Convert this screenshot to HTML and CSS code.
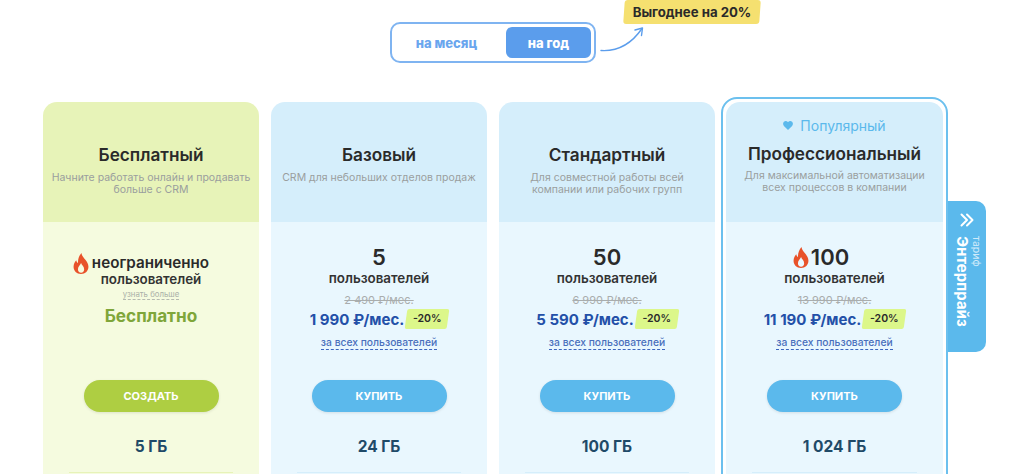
FILE: index.html
```html
<!DOCTYPE html>
<html lang="ru">
<head>
    <meta charset="UTF-8">
    <meta name="viewport" content="width=device-width, initial-scale=1.0">
    <title>Тарифы</title>
    <link rel="stylesheet" href="styles.css">
</head>
<body>
    <div class="period">
        <div class="period-switch">
            <span class="period-option">на месяц</span>
            <span class="period-option period-active">на год</span>
        </div>
        <div class="period-hint">
            <svg class="hint-arrow" viewBox="0 0 44 26">
                <path d="M1 24.500c16 1 30-6 41-22" stroke="#5b9dec" stroke-width="1.4" stroke-linecap="round" fill="none"/>
                <path d="M35 4l7.500-2-1 7.500" stroke="#5b9dec" stroke-width="1.4" stroke-linecap="round" stroke-linejoin="round" fill="none"/>
            </svg>
            <span class="hint-badge"><span class="hint-text">Выгоднее на 20%</span></span>
        </div>
    </div>

    <div class="plans">
        <div class="plan plan-free">
            <div class="plan-head">
                <h2 class="plan-title">Бесплатный</h2>
                <p class="plan-desc">Начните работать онлайн и продавать больше с CRM</p>
            </div>
            <div class="plan-body">
                <div class="plan-info">
                    <div class="users users-text">
                        <svg class="flame" viewBox="0 0 18 24"><path d="M9.500 0c.6 3.600 2.600 5.300 4.500 7.800 1.800 2.300 3.500 4.700 3.500 8C17.500 20.500 14 24 9 24S.5 20.500.5 15.800c0-3.300 1.500-5.600 3.100-7.400.3 1.500.9 2.500 2 3.200C5.300 7.400 6.800 3 9.500 0Zm-.4 11.500c-.6 2-3.600 3.800-3.600 7 0 2.400 1.500 4 3.600 4s3.500-1.600 3.500-4c0-3-2.900-4.800-3.500-7Z" fill="#e8522a"/></svg>
                        неограниченно
                    </div>
                    <div class="users-label">пользователей</div>
                    <span class="more-link">узнать больше</span>
                    <div class="free-price">Бесплатно</div>
                </div>
                <button class="btn btn-green">СОЗДАТЬ</button>
                <div class="storage">5 ГБ</div>
                <div class="divider"></div>
            </div>
        </div>

        <div class="plan">
            <div class="plan-head">
                <h2 class="plan-title">Базовый</h2>
                <p class="plan-desc">CRM для небольших отделов продаж</p>
            </div>
            <div class="plan-body">
                <div class="plan-info">
                    <div class="users">5</div>
                    <div class="users-label">пользователей</div>
                    <div class="old-price">2 490 ₽/мес.</div>
                    <div class="price">1 990 ₽/мес.<span class="discount">-20%</span></div>
                    <span class="all-users">за всех пользователей</span>
                </div>
                <button class="btn">КУПИТЬ</button>
                <div class="storage">24 ГБ</div>
                <div class="divider"></div>
            </div>
        </div>

        <div class="plan">
            <div class="plan-head">
                <h2 class="plan-title">Стандартный</h2>
                <p class="plan-desc">Для совместной работы всей компании или рабочих групп</p>
            </div>
            <div class="plan-body">
                <div class="plan-info">
                    <div class="users">50</div>
                    <div class="users-label">пользователей</div>
                    <div class="old-price">6 990 ₽/мес.</div>
                    <div class="price">5 590 ₽/мес.<span class="discount">-20%</span></div>
                    <span class="all-users">за всех пользователей</span>
                </div>
                <button class="btn">КУПИТЬ</button>
                <div class="storage">100 ГБ</div>
                <div class="divider"></div>
            </div>
        </div>

        <div class="plan plan-popular">
            <div class="plan-head">
                <div class="popular-label">
                    <svg class="heart" viewBox="0 0 12 11"><path d="M6 11 1 6C-.4 4.500-.3 2.300 1 1c1.300-1.300 3.500-1.300 4.500 0l.5.600.5-.6c1-1.300 3.200-1.300 4.500 0 1.300 1.300 1.400 3.500 0 5Z" fill="#5bb9ec"/></svg>
                    Популярный
                </div>
                <h2 class="plan-title">Профессиональный</h2>
                <p class="plan-desc">Для максимальной автоматизации всех процессов в компании</p>
            </div>
            <div class="plan-body">
                <div class="plan-info">
                    <div class="users users-hot">
                        <svg class="flame" viewBox="0 0 18 24"><path d="M9.500 0c.6 3.600 2.600 5.300 4.500 7.800 1.800 2.300 3.500 4.700 3.500 8C17.500 20.500 14 24 9 24S.5 20.500.5 15.800c0-3.300 1.500-5.600 3.100-7.400.3 1.500.9 2.500 2 3.200C5.300 7.400 6.800 3 9.500 0Zm-.4 11.500c-.6 2-3.600 3.800-3.600 7 0 2.400 1.500 4 3.600 4s3.500-1.600 3.500-4c0-3-2.900-4.800-3.500-7Z" fill="#e8522a"/></svg>100
                    </div>
                    <div class="users-label">пользователей</div>
                    <div class="old-price">13 990 ₽/мес.</div>
                    <div class="price">11 190 ₽/мес.<span class="discount">-20%</span></div>
                    <span class="all-users">за всех пользователей</span>
                </div>
                <button class="btn">КУПИТЬ</button>
                <div class="storage">1 024 ГБ</div>
                <div class="divider"></div>
            </div>
        </div>
    </div>

    <div class="enterprise-tab">
        <svg class="chevrons" viewBox="0 0 14 14"><path d="M1.500 1.500 7 7l-5.500 5.500M7 1.500 12.500 7 7 12.500" stroke="#fff" stroke-width="2" stroke-linecap="round" stroke-linejoin="round" fill="none"/></svg>
        <div class="tab-text"><span class="tab-small">тариф</span><span class="tab-big">Энтерпрайз</span></div>
    </div>
</body>
</html>
```

FILE: styles.css
```css
html, body {
    height: 474px;
    overflow: hidden;
}

body {
    position: relative;
    margin: 0;
    background-color: white;
    color: #2a2a2a;
    font-family: Inter, "Noto Sans", sans-serif;
}

.period {
    display: flex;
    align-items: flex-start;
    height: 97px;
    padding-left: 390px;
    box-sizing: border-box;
}

.period-switch {
    display: flex;
    align-items: center;
    justify-content: space-between;
    box-sizing: border-box;
    width: 206px;
    height: 41px;
    margin-top: 22px;
    padding: 0 3px 0 0;
    border: 2px solid #7fb4f1;
    border-radius: 10px;
}

.period-option {
    display: flex;
    align-items: center;
    justify-content: center;
    width: 109px;
    height: 31px;
    font-size: 13px;
    font-weight: 800;
    color: #6aa6ee;
}

.period-active {
    width: 85px;
    background-color: #5b9dec;
    border-radius: 6px;
    color: white;
}

.period-hint {
    position: relative;
    margin-left: 28px;
}

.hint-badge {
    position: relative;
    display: block;
    width: 136px;
    height: 24px;
    line-height: 25px;
    text-align: center;
    font-size: 13.200px;
    font-weight: 700;
    color: #2a2a2a;
}

.hint-badge::before {
    content: "";
    position: absolute;
    top: 0;
    left: 0;
    right: 0;
    bottom: 0;
    background-color: #f5e070;
    border-radius: 3px;
    transform: skewX(-4deg);
}

.hint-text {
    position: relative;
}

.hint-arrow {
    position: absolute;
    left: -24px;
    top: 26px;
    width: 44px;
    height: 26px;
}

.plans {
    display: grid;
    grid-template-columns: repeat(4, 216px);
    column-gap: 12px;
    box-sizing: border-box;
    height: 377px;
    padding: 5px 0 0 43px;
    overflow: hidden;
}

.plan {
    position: relative;
    height: 372px;
}

.plan-popular {
    margin-left: -1px;
}

.plan-popular::before {
    content: "";
    position: absolute;
    top: -5px;
    left: -5px;
    right: -5px;
    bottom: -20px;
    border: 2px solid #6cc0ee;
    border-radius: 16px;
}

.plan-head {
    position: relative;
    box-sizing: border-box;
    height: 120px;
    padding-top: 43px;
    text-align: center;
    background-color: #d5eefb;
    border-radius: 14px 14px 0 0;
}

.plan-free .plan-head {
    background-color: #e7f3b8;
}

.plan-title {
    margin: 0;
    font-size: 17.200px;
    line-height: 20px;
    font-weight: 600;
    color: #2a2a2a;
}

.plan-desc {
    margin: 7px 6px 0;
    font-size: 10.500px;
    line-height: 12px;
    color: #9a9e9e;
}

.plan-popular .plan-head {
    padding-top: 15px;
}

.plan-popular .plan-desc {
    margin-top: 6px;
}

.popular-label {
    display: flex;
    align-items: center;
    justify-content: center;
    gap: 7px;
    height: 17px;
    margin-bottom: 10px;
    font-size: 14px;
    color: #5bb9ec;
}

.heart {
    width: 10px;
    height: 9px;
}

.plan-body {
    position: relative;
    height: 252px;
    text-align: center;
    background-color: #e9f7fe;
}

.plan-free .plan-body {
    background-color: #f5fbdf;
}

.plan-info {
    height: 158px;
    padding-top: 24px;
    box-sizing: border-box;
}

.users {
    display: flex;
    align-items: center;
    justify-content: center;
    gap: 2px;
    height: 22px;
    font-size: 22px;
    line-height: 22px;
    font-weight: 600;
    color: #2a2a2a;
}

.users-hot {
    padding-right: 27px;
}

.users-text {
    height: 20px;
    margin-top: 7px;
    padding-right: 20px;
    font-size: 15.200px;
    gap: 3px;
}

.plan-free .plan-info {
    padding-top: 24px;
}

.flame {
    width: 16px;
    height: 21px;
}

.users-label {
    margin-top: 1px;
    font-size: 13.400px;
    line-height: 18px;
    font-weight: 600;
    color: #333;
}

.plan-free .users-label {
    margin-top: 0;
    line-height: 12px;
}

.more-link {
    display: block;
    width: fit-content;
    margin: 4px auto 0;
    font-size: 7.800px;
    line-height: 10px;
    color: #aab0a8;
    border-bottom: 1px dashed #b5bab0;
}

.free-price {
    margin-top: 5px;
    font-size: 17.200px;
    line-height: 22px;
    font-weight: 700;
    color: #7fa63a;
}

.old-price {
    margin-top: 6px;
    font-size: 11px;
    line-height: 14px;
    color: #a9adad;
    text-decoration: line-through;
}

.price {
    display: flex;
    align-items: center;
    justify-content: center;
    height: 22px;
    margin-top: 1px;
    font-size: 15px;
    font-weight: 700;
    color: #2350a8;
}

.discount {
    position: relative;
    display: inline-block;
    width: 42px;
    height: 20px;
    margin-left: 2px;
    line-height: 20px;
    font-size: 10.500px;
    font-weight: 600;
    color: #2a2a2a;
    z-index: 0;
}

.discount::before {
    content: "";
    position: absolute;
    top: 0;
    left: 0;
    right: 0;
    bottom: 0;
    z-index: -1;
    background-color: #dcf78a;
    border-radius: 2px;
    transform: skewX(-8deg);
}

.all-users {
    display: inline-block;
    margin-top: 6px;
    font-size: 10.300px;
    line-height: 13px;
    font-weight: 500;
    color: #4a6fbc;
    border-bottom: 1px dashed #3c66c0;
}

.btn {
    display: block;
    width: 135px;
    height: 32px;
    margin: 0 auto;
    padding: 0;
    border: none;
    border-radius: 16px;
    font-family: inherit;
    font-size: 11px;
    font-weight: 700;
    color: white;
    background-color: #5bb9ec;
    box-shadow: 0 1px 3px rgba(0,0,0,0.1);
}

.btn-green {
    background-color: #aece42;
}

.storage {
    margin-top: 25px;
    font-size: 15.500px;
    line-height: 20px;
    font-weight: 700;
    color: #1f4a68;
}

.divider {
    height: 1px;
    margin: 15px 26px 0;
    background-color: #d5eefb;
}

.plan-free .divider {
    background-color: #e7f3b8;
}

.enterprise-tab {
    position: absolute;
    top: 201px;
    left: 948px;
    box-sizing: border-box;
    width: 38px;
    height: 151px;
    padding-top: 12px;
    background-color: #5bb9ec;
    border-radius: 0 10px 10px 0;
}

.chevrons {
    display: block;
    width: 14px;
    height: 14px;
    margin: 0 auto;
}

.tab-text {
    display: flex;
    flex-direction: column;
    align-items: flex-start;
    width: 30px;
    height: 100px;
    margin: 9px 0 0 5px;
    writing-mode: vertical-rl;
    color: white;
}

.tab-small {
    font-size: 10.500px;
    line-height: 13px;
    color: #cfeafa;
}

.tab-big {
    font-size: 15px;
    line-height: 15px;
    font-weight: 700;
}
```
